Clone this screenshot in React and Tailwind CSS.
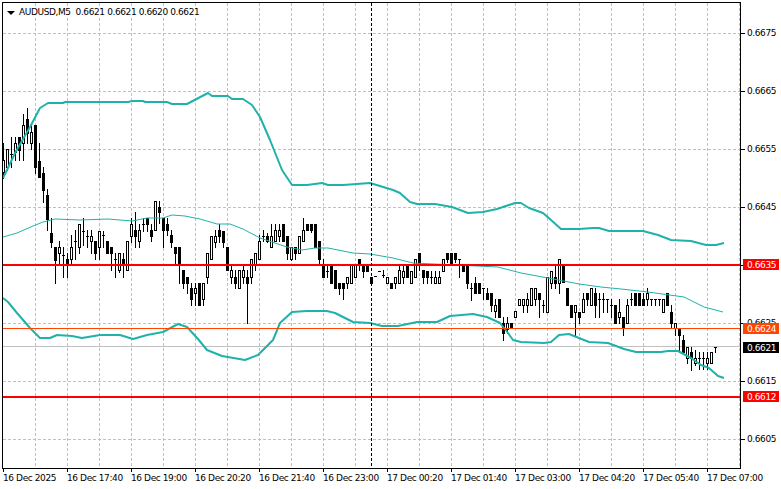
// [top, bottom, high, low, white]
const candles = [
  [160,172,143,178,1],[149,167,149,170,1],[154,154,137,167,0],[143,152,137,160,1],[137,150,137,160,0],
  [125,143,114,160,1],[119,133,108,143,0],[132,143,125,149,1],[125,167,125,173,0],[161,177,143,177,0],
  [173,190,167,202,0],[195,219,189,230,0],[233,242,218,247,0],[247,260,247,283,0],[247,253,241,265,1],
  [255,255,247,277,0],[259,264,253,277,0],[247,259,235,264,1],[241,241,230,259,0],[224,247,224,253,1],
  [231,231,218,245,0],[236,236,230,247,0],[236,241,230,253,1],[241,253,241,259,0],[231,247,231,259,1],
  [235,235,231,247,0],[241,253,241,253,0],[247,253,247,270,0],[259,259,253,277,0],[253,270,253,272,1],
  [259,265,253,277,0],[241,270,241,270,1],[224,236,218,242,1],[230,236,212,247,0],[230,241,224,247,1],
  [224,224,218,231,0],[218,224,218,231,0],[230,236,224,241,0],[201,230,201,230,1],[207,212,201,223,0],
  [218,230,218,247,0],[224,230,218,235,0],[235,242,230,247,0],[247,253,247,265,0],[247,264,247,283,0],
  [270,283,270,288,0],[277,283,277,293,0],[288,299,283,305,0],[288,293,283,305,1],[283,305,283,305,0],
  [283,299,283,305,1],[253,277,253,283,1],[236,259,236,259,1],[236,242,230,247,1],[230,236,224,242,0],
  [231,242,231,247,0],[247,270,247,270,0],[270,277,265,283,1],[277,283,270,288,0],[270,288,270,288,1],
  [270,277,265,283,1],[277,283,270,323,0],[259,277,259,283,1],[253,265,253,270,1],[241,259,235,259,1],
  [236,236,230,241,0],[236,241,233,242,0],[236,247,224,247,1],[230,241,224,241,1],[230,236,224,241,1],
  [224,241,224,241,0],[236,253,236,259,0],[247,259,247,260,1],[247,253,247,259,0],[236,253,236,253,1],
  [230,241,218,241,1],[224,230,224,230,0],[224,230,224,232,0],[224,247,224,247,0],[241,259,241,265,0],
  [265,277,259,277,0],[271,271,265,277,0],[265,283,265,283,0],[270,288,270,288,0],[283,288,283,294,0],
  [283,288,283,299,0],[277,283,277,288,1],[265,283,265,283,1],[265,277,265,277,1],[259,265,259,270,0],
  [265,271,265,277,0],[265,271,265,271,0],[277,283,277,283,0],[276,276,276,276,0],[271,271,271,271,0],
  [275,275,270,277,0],[277,283,277,283,1],[283,288,283,288,0],[277,283,277,288,1],[270,283,265,283,1],
  [271,277,265,283,1],[265,277,265,277,0],[271,283,271,283,1],[259,277,259,277,1],[253,265,253,270,0],
  [270,277,270,283,0],[271,277,271,283,0],[277,277,271,283,0],[277,283,271,283,1],[277,283,271,283,1],
  [259,271,259,271,1],[253,259,253,262,0],[253,265,253,265,0],[253,259,253,262,0],[259,259,259,277,0],
  [265,271,265,271,0],[265,283,265,288,0],[288,288,283,300,0],[283,293,277,293,0],[283,293,283,293,0],
  [288,288,288,299,0],[293,299,288,299,0],[293,305,293,311,0],[305,311,299,317,1],[299,317,299,317,0],
  [323,333,317,340,0],[323,329,317,333,1],[323,328,323,328,0],[311,317,311,317,1],[299,305,299,305,1],
  [299,305,299,312,1],[299,305,293,312,1],[288,305,288,305,1],[288,299,288,305,1],[293,299,293,317,0],
  [305,305,300,312,0],[277,312,277,312,1],[271,283,271,288,1],[277,283,265,288,0],[259,283,259,293,1],
  [265,282,265,282,0],[288,305,288,305,0],[305,317,305,317,0],[305,312,305,335,1],[312,317,312,323,0],
  [299,312,293,312,1],[293,299,293,305,0],[288,305,288,305,1],[293,305,288,317,0],[299,299,293,317,0],
  [299,299,293,312,0],[299,299,299,312,0],[305,305,299,317,0],[305,323,305,323,0],[312,317,299,323,1],
  [317,328,317,335,0],[305,323,299,323,1],[299,299,293,305,0],[293,305,293,305,0],[293,305,293,305,0],
  [299,305,293,305,0],[293,299,288,305,1],[299,299,299,305,0],[299,299,299,305,0],[299,299,299,305,0],
  [299,312,299,312,1],[293,305,293,305,0],[312,323,305,328,0],[323,328,323,335,1],[328,335,328,352,0],
  [340,352,335,352,0],[347,358,347,363,1],[352,358,347,370,0],[358,363,350,365,1],[358,358,352,369,0],
  [358,358,352,369,0],[358,363,352,369,1],[352,363,352,363,1],[347,347,347,352,0],
];

const upperBand = "3,178 7,170 15,153 30,127 40,108 48,103 63,103 65,102 128,102 132,101 143,101 145,102 167,102 172,104 187,104 208,93 212,96 228,96 232,99 243,99 252,105 260,117 270,140 282,170 292,185 307,185 322,183 328,185 343,185 370,183 393,190 400,193 410,202 417,204 435,204 452,207 468,213 483,212 497,209 515,203 521,203 529,208 543,213 551,220 561,229 579,229 593,228 599,228 609,231 643,231 658,235 671,240 691,241 706,245 716,245 724,243";
const lowerBand = "3,298 8,302 17,313 30,328 40,338 50,338 57,335 72,336 82,338 100,335 120,335 133,339 147,335 163,332 178,324 187,327 198,339 207,350 222,356 245,360 258,355 273,340 280,323 292,312 307,311 327,311 335,313 353,322 370,323 382,326 398,326 417,322 437,322 450,316 473,314 487,317 500,323 508,333 513,340 521,342 544,343 551,342 559,335 569,334 579,338 589,342 608,343 624,349 636,352 661,352 668,351 678,351 691,358 701,365 709,368 718,376 724,378";
const midBand = "3,237 17,233 33,226 43,222 55,219 80,220 108,219 132,221 147,218 163,218 172,215 185,216 200,219 217,224 230,224 243,229 260,238 287,247 302,250 315,248 328,248 353,253 370,254 393,258 413,263 498,267 521,273 548,278 579,284 601,287 621,289 648,292 684,297 704,307 723,312";

const prices = ["0.6675", "0.6665", "0.6655", "0.6645", "0.6635", "0.6625", "0.6615", "0.6605"];
const gridY = [33, 91, 149, 207, 265, 323, 381, 439];
const gridX = Array.from({ length: 23 }, (_, i) => 35 + i * 32);
const times = ["16 Dec 2025", "16 Dec 17:40", "16 Dec 19:00", "16 Dec 20:20", "16 Dec 21:40", "16 Dec 23:00", "17 Dec 00:20", "17 Dec 01:40", "17 Dec 03:00", "17 Dec 04:20", "17 Dec 05:40", "17 Dec 07:00"];

function Candle({ data, index }) {
  const [top, bottom, high, low, white] = data;
  const x = 3 + index * 4;
  return (
    <g>
      <rect x={x} y={high} width="1" height={Math.max(low - high + 1, 1)} fill="#000" />
      <rect x={x - 1} y={top} width="3" height={Math.max(bottom - top + 1, 1)} fill="#000" />
      {white === 1 && bottom - top > 1 && (
        <rect x={x} y={top + 1} width="1" height={bottom - top - 1} fill="#fff" />
      )}
    </g>
  );
}

function Chart() {
  return (
    <svg width="737" height="465" viewBox="3 3 737 465" className="block" shapeRendering="crispEdges">
      {gridX.map((x) => (
        <line key={x} x1={x + 0.5} x2={x + 0.5} y1="3" y2="468" stroke="#c0c0c0" strokeDasharray="3 2" />
      ))}
      {gridY.map((y) => (
        <line key={y} x1="3" x2="740" y1={y + 0.5} y2={y + 0.5} stroke="#c0c0c0" strokeDasharray="3 2" />
      ))}
      <line x1="3" x2="740" y1="346.5" y2="346.5" stroke="#c0c0c0" />
      {candles.map((c, i) => (
        <Candle key={i} data={c} index={i} />
      ))}
      <g fill="none" stroke="#20b2aa" strokeLinejoin="round" shapeRendering="auto">
        <polyline points={upperBand} strokeWidth="2" />
        <polyline points={lowerBand} strokeWidth="2" />
        <polyline points={midBand} strokeWidth="1" />
      </g>
      <rect x="3" y="264" width="737" height="2" fill="#ff0000" />
      <rect x="3" y="328" width="737" height="1" fill="#ff4500" />
      <rect x="3" y="396" width="737" height="2" fill="#ff0000" />
      <line x1="371.5" x2="371.5" y1="3" y2="468" stroke="#000" strokeDasharray="3 2" />
    </svg>
  );
}

function Tag({ top, bg, children }) {
  return (
    <div className={`absolute left-[2px] w-[36px] h-[11px] pl-[4px] leading-[12px] text-white ${top} ${bg}`}>
      {children}
    </div>
  );
}

export default function App() {
  return (
    <div className="w-[781px] h-[489px] bg-white text-black text-[9px] tracking-[-0.4px] overflow-hidden font-['DejaVu_Sans',sans-serif]">
      <div className="flex h-[469px]">
        <div className="relative mt-[2px] ml-[2px] w-[739px] h-[467px] border border-black">
          <Chart />
          <div className="absolute left-[4px] top-[4px] flex items-center gap-[4px] whitespace-pre bg-white leading-[11px]">
            <span className="w-0 h-0 border-x-[4px] border-x-transparent border-t-[4px] border-t-black" />
            <span>AUDUSD,M5  0.6621 0.6621 0.6620 0.6621</span>
          </div>
        </div>
        <div className="relative flex-1 flex flex-col pt-[4px]">
          {prices.map((p) => (
            <div key={p} className="h-[58px] flex items-center gap-[2px]">
              <span className="w-[4px] h-px bg-black" />
              <span className="mt-[2px]">{p}</span>
            </div>
          ))}
          <Tag top="top-[259px]" bg="bg-[#ff0000]">0.6635</Tag>
          <Tag top="top-[323px]" bg="bg-[#ff4500]">0.6624</Tag>
          <Tag top="top-[342px]" bg="bg-black">0.6621</Tag>
          <Tag top="top-[391px]" bg="bg-[#ff0000]">0.6612</Tag>
        </div>
      </div>
      <div className="flex pl-[3px]">
        {times.map((t) => (
          <div key={t} className="w-[64px] shrink-0 relative pt-[4px] leading-[11px]">
            <span className="absolute left-0 top-0 w-px h-[3px] bg-black" />
            {t}
          </div>
        ))}
      </div>
    </div>
  );
}
